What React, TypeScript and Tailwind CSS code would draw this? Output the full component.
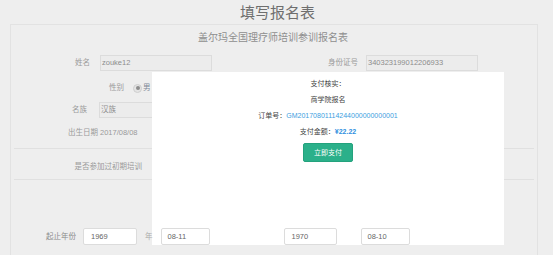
import React from "react";

const font = { fontFamily: '"Liberation Sans", "Noto Sans CJK SC", sans-serif' };

export default function App() {
  return (
    <div
      className="relative w-[553px] h-[255px] overflow-hidden bg-[#eeeeee]"
      style={font}
    >
      {/* page title */}
      <div className="h-[24px] flex items-center justify-center text-[15px] leading-[15px] text-[#6e6e6e] pl-[2px]">
        填写报名表
      </div>

      {/* panel */}
      <div className="ml-[10px] w-[528px] h-[240px] border border-b-0 border-[#e2e2e2]">
        <div className="h-[23px] flex items-center justify-center text-[10px] text-[#8e8e8e] pt-[2px] pr-[2px]">
          盖尔玛全国理疗师培训参训报名表
        </div>

        {/* row 1 */}
        <div className="mt-[7px] flex items-center h-[16px] text-[7.5px] text-[#9a9a9a]">
          <div className="w-[79px] text-right">姓名</div>
          <div className="ml-[10px] w-[112px] h-[16px] border border-[#dcdcdc] bg-[#ececec] flex items-center pl-[1px] text-[#8c8c8c]">
            zouke12
          </div>
          <div className="w-[146px] text-right">身份证号</div>
          <div className="ml-[8px] w-[112px] h-[16px] border border-[#dcdcdc] bg-[#ececec] flex items-center pl-[1px] text-[#8c8c8c]">
            340323199012206933
          </div>
        </div>

        {/* row 2 */}
        <div className="mt-[9px] flex items-center h-[16px] text-[7.5px] text-[#9a9a9a]">
          <div className="w-[113px] text-right">性别</div>
          <div className="ml-[9px] w-[9px] h-[9px] rounded-full border border-[#cfcfcf] bg-[#e4e4e4] flex items-center justify-center">
            <div className="w-[4px] h-[4px] rounded-full bg-[#8d8d8d]" />
          </div>
          <div className="ml-[1px] text-[#7e8a99]">男</div>
        </div>

        {/* row 3 */}
        <div className="mt-[6px] flex items-center h-[16px] text-[7.5px] text-[#9a9a9a]">
          <div className="w-[76px] text-right">名族</div>
          <div className="ml-[12px] w-[112px] h-[16px] border border-[#dcdcdc] bg-[#ececec] flex items-center pl-[1px] text-[#8c8c8c]">
            汉族
          </div>
        </div>

        {/* row 4 */}
        <div className="mt-[7px] flex items-center h-[16px] text-[7.5px] text-[#9a9a9a]">
          <div className="w-[87px] text-right">出生日期</div>
          <div className="ml-[2px] text-[#9a9a9a]">2017/08/08</div>
        </div>

        <div className="mx-[3px] mt-[7px] border-t border-[#e0e0e0]" />

        <div className="h-[30px] flex items-center pt-[5px] text-[7.5px] text-[#9a9a9a]">
          <div className="w-[131px] text-right">是否参加过初期培训</div>
        </div>

        <div className="mx-[3px] border-t border-[#e0e0e0]" />

        {/* bottom row */}
        <div className="relative z-10 mt-[48px] flex items-center h-[17px] text-[7.5px] text-[#9a9a9a]">
          <div className="w-[65px] text-right text-[#8a8a8a]">起止年份</div>
          <div className="ml-[7px] w-[54px] h-[17px] rounded-[2px] border border-[#dcdcdc] bg-white flex items-center pl-[7px] text-[#666]">
            1969
          </div>
          <div className="ml-[8px] text-[#aaa]">年</div>
          <div className="ml-[8px] w-[49px] h-[17px] rounded-[2px] border border-[#dcdcdc] bg-white flex items-center pl-[6px] text-[#666]">
            08-11
          </div>
          <div className="ml-[74px] w-[53px] h-[17px] rounded-[2px] border border-[#dcdcdc] bg-white flex items-center pl-[7px] text-[#666]">
            1970
          </div>
          <div className="ml-[24px] w-[49px] h-[17px] rounded-[2px] border border-[#dcdcdc] bg-white flex items-center pl-[6px] text-[#666]">
            08-10
          </div>
        </div>
      </div>

      {/* payment modal */}
      <div className="absolute left-[152px] top-[72px] w-[352px] h-[173px] bg-white flex flex-col items-center pt-[4px] text-[7px] leading-[16px] text-[#444]">
        <div>支付核实：</div>
        <div>商学院报名</div>
        <div>
          订单号：<span className="text-[#3d9ee0]">GM20170801114244000000000001</span>
        </div>
        <div>
          支付金额：<span className="text-[#2f8fe0] font-bold">¥22.22</span>
        </div>
        <div className="mt-[3px] w-[50px] h-[19px] rounded-[2px] bg-[#2bb08a] border border-[#24a27d] flex items-center justify-center text-white leading-none">
          立即支付
        </div>
      </div>
    </div>
  );
}
